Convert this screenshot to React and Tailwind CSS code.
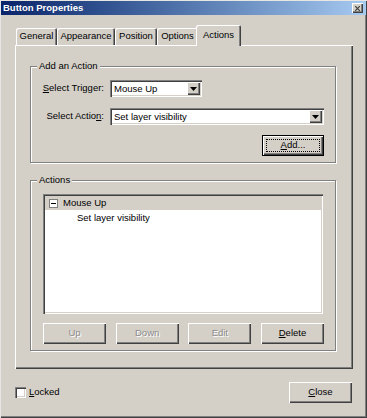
import React from "react";

const raised =
  "bg-[#d4d0c8] shadow-[inset_1px_1px_0_#fff,inset_-1px_-1px_0_#404040,inset_-2px_-2px_0_#808080]";
const sunken =
  "bg-white shadow-[inset_1px_1px_0_#808080,inset_2px_2px_0_#404040,inset_-1px_-1px_0_#fff,inset_-2px_-2px_0_#d4d0c8]";
const disabledText = "text-[#8c8c8c] [text-shadow:1px_1px_0_#fff]";

function Tab({ label, width, active }) {
  if (active) {
    return (
      <div
        className={`relative z-10 -mb-px -ml-[2px] flex h-[21px] items-start justify-center rounded-t-[2px] bg-[#d4d0c8] pt-[3px] shadow-[inset_1px_1px_0_#fff,inset_-1px_0_0_#404040,inset_-2px_0_0_#808080] ${width}`}
      >
        {label}
      </div>
    );
  }
  return (
    <div
      className={`flex h-[17px] items-center justify-center rounded-t-[2px] bg-[#d4d0c8] shadow-[inset_1px_1px_0_#fff,inset_-1px_0_0_#404040,inset_-2px_0_0_#808080] ${width}`}
    >
      {label}
    </div>
  );
}

function Dropdown({ value, width }) {
  return (
    <div className={`flex h-[17px] items-center ${sunken} pl-[4px] pr-[2px] ${width}`}>
      <span className="flex-1 leading-none">{value}</span>
      <span className={`flex h-[13px] w-[13px] items-center justify-center ${raised}`}>
        <svg width="7" height="4" viewBox="0 0 7 4">
          <path d="M0 0h7L3.5 4z" fill="#000" />
        </svg>
      </span>
    </div>
  );
}

function GroupBox({ title, className, children }) {
  return (
    <div
      className={`relative border border-[#808080] shadow-[inset_1px_1px_0_#fff,1px_1px_0_#fff] ${className}`}
    >
      <span className="absolute -top-[7px] left-[6px] bg-[#d4d0c8] px-[2px] leading-[12px]">
        {title}
      </span>
      {children}
    </div>
  );
}

function PushButton({ children, disabled, className = "" }) {
  return (
    <div
      className={`flex h-[21px] w-[63px] items-center justify-center ${raised} ${
        disabled ? disabledText : "text-black"
      } ${className}`}
    >
      {children}
    </div>
  );
}

export default function App() {
  return (
    <div className="relative h-[418px] w-[367px] overflow-hidden bg-[#d4d0c8] font-['Liberation_Sans',Arial,sans-serif] text-[9.5px] text-black shadow-[inset_1px_1px_0_#e8e6e2,inset_-1px_-1px_0_#404040,inset_-2px_-2px_0_#808080]">
      {/* title bar */}
      <div className="mx-[1px] mt-[1px] flex h-[14px] items-center justify-between bg-gradient-to-r from-[#0a246a] to-[#a6caf0] pl-[2px] pr-[3px]">
        <span className="text-[9.5px] font-bold leading-none text-white">Button Properties</span>
        <span className={`flex h-[10px] w-[11px] items-center justify-center ${raised}`}>
          <svg width="5" height="5" viewBox="0 0 5 5">
            <path d="M0 0L5 5M5 0L0 5" stroke="#404040" strokeWidth="1.2" />
          </svg>
        </span>
      </div>

      <div className="pl-[15px] pr-[14px]">
        {/* tabs */}
        <div className="mt-[11px] flex h-[19px] items-end pl-px">
          <Tab label="General" width="w-[41px]" />
          <Tab label="Appearance" width="w-[58px]" />
          <Tab label="Position" width="w-[42px]" />
          <Tab label="Options" width="w-[41px]" />
          <Tab label="Actions" width="w-[45px]" active />
        </div>

        {/* tab panel */}
        <div className="h-[324px] pl-[15px] pr-[17px] pt-[21px] shadow-[inset_1px_1px_0_#fff,inset_-1px_-1px_0_#404040,inset_-2px_-2px_0_#808080]">
          <GroupBox title="Add an Action" className="h-[97px] pl-[11px] pr-[11px] pt-[13px]">
            <div className="flex items-center">
              <span className="w-[68px] pr-[6px] text-right">
                <u>S</u>elect Trigger:
              </span>
              <Dropdown value="Mouse Up" width="w-[92px]" />
            </div>
            <div className="mt-[11px] flex items-center">
              <span className="w-[68px] pr-[6px] text-right">
                Select Actio<u>n</u>:
              </span>
              <Dropdown value="Set layer visibility" width="w-[214px]" />
            </div>
            <div className="mt-[10px] flex justify-end">
              <div className="flex h-[21px] w-[62px] border border-black">
                <div className={`flex flex-1 p-[3px] ${raised}`}>
                  <div className="flex flex-1 items-center justify-center border border-dotted border-black">
                    <u>A</u>dd...
                  </div>
                </div>
              </div>
            </div>
          </GroupBox>

          <GroupBox title="Actions" className="mt-[17px] h-[171px] pl-[12px] pt-[13px]">
            <div className={`h-[120px] w-[280px] p-[2px] ${sunken}`}>
              <div className="flex h-[14px] items-center bg-[#d4d0c8] pl-[4px]">
                <span className="flex h-[9px] w-[9px] items-center justify-center border border-[#808080] bg-white">
                  <span className="h-px w-[5px] bg-black" />
                </span>
                <span className="ml-[5px] leading-none">Mouse Up</span>
              </div>
              <div className="pl-[32px] pt-[2px] leading-[12px]">Set layer visibility</div>
            </div>
            <div className="mt-[9px] flex w-[281px] justify-between">
              <PushButton disabled>Up</PushButton>
              <PushButton disabled>Down</PushButton>
              <PushButton disabled>Edit</PushButton>
              <PushButton>
                <u>D</u>elete
              </PushButton>
            </div>
          </GroupBox>
        </div>

        {/* footer */}
        <div className="mt-[13px] flex items-center justify-between pr-px">
          <div className="flex items-center">
            <span className={`h-[11px] w-[11px] ${sunken}`} />
            <span className="ml-[3px]">
              <u>L</u>ocked
            </span>
          </div>
          <PushButton className="h-[20px]">
            <u>C</u>lose
          </PushButton>
        </div>
      </div>
    </div>
  );
}
